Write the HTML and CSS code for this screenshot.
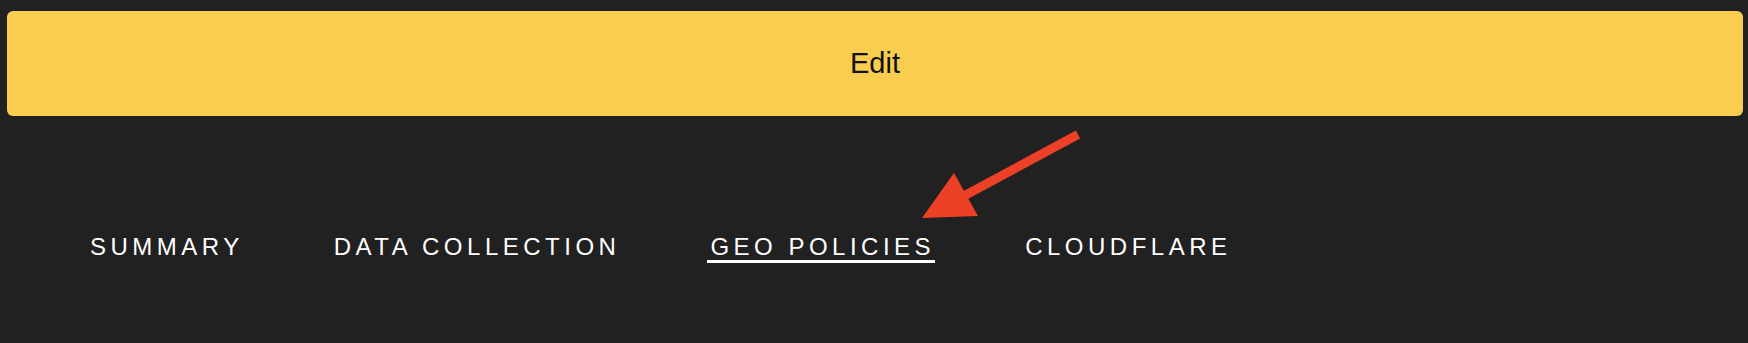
FILE: index.html
```html
<!DOCTYPE html>
<html lang="en">
<head>
    <meta charset="UTF-8">
    <meta name="viewport" content="width=device-width, initial-scale=1.0">
    <title>Settings</title>
    <link rel="stylesheet" href="styles.css">
</head>
<body>
    <div class="page">
        <button class="edit-btn">Edit</button>

        <nav class="tabs">
            <span class="tab">SUMMARY</span>
            <span class="tab">DATA COLLECTION</span>
            <span class="tab active">GEO POLICIES</span>
            <span class="tab">CLOUDFLARE</span>
        </nav>

        <!-- annotation arrow -->
        <svg class="arrow" width="1748" height="343" viewBox="0 0 1748 343">
            <line x1="1078" y1="134.5" x2="962" y2="197" stroke="#ec4127" stroke-width="9"/>
            <polygon points="954,173 922,218 978,216" fill="#ec4127"/>
        </svg>
    </div>
</body>
</html>
```

FILE: styles.css
```css
body {
    margin: 0;
    padding: 0;
    background-color: #212121;
    font-family: "Liberation Sans", Arial, sans-serif;
}

.page {
    position: relative;
    height: 343px;
    padding: 11px 5px 0 7px;
    box-sizing: border-box;
}

.edit-btn {
    display: flex;
    align-items: center;
    justify-content: center;
    width: 100%;
    height: 105px;
    padding: 0;
    border: none;
    border-radius: 6px;
    background-color: #f9cd4f;
    color: #111;
    font-family: inherit;
    font-size: 29px;
    cursor: pointer;
}

.tabs {
    display: flex;
    gap: 87px;
    margin-top: 118px;
    padding-left: 80px;
}

.tab {
    padding: 0 0 0 3px;
    color: #fff;
    font-size: 24px;
    line-height: 26px;
    letter-spacing: 4.5px;
    cursor: pointer;
}

.tab.active {
    border-bottom: 3.5px solid #fff;
}

.arrow {
    position: absolute;
    top: 0;
    left: 0;
    pointer-events: none;
}
```
